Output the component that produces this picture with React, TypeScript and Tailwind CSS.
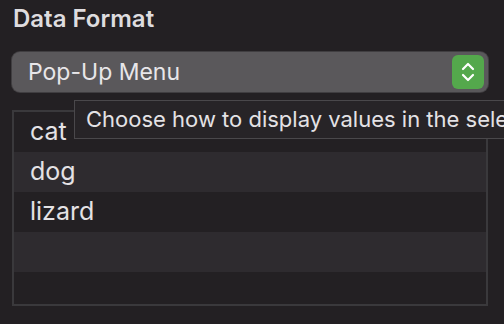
import React from "react";

const ROWS = ["cat", "dog", "lizard", "", ""];

function Chevrons() {
  return (
    <svg width="16" height="24" viewBox="0 0 16 24" fill="none">
      <path d="M3 9 L8 4 L13 9" stroke="white" strokeWidth="2.2" strokeLinecap="round" strokeLinejoin="round" />
      <path d="M3 15 L8 20 L13 15" stroke="white" strokeWidth="2.2" strokeLinecap="round" strokeLinejoin="round" />
    </svg>
  );
}

export default function App() {
  return (
    <div
      className="relative h-[324px] w-[504px] overflow-hidden bg-[#232023] text-[#e4e2e5]"
      style={{ fontFamily: "Inter, 'Noto Sans', sans-serif" }}
    >
      <div className="px-[13px] pt-[5px]">
        <div className="h-[28px] text-[24px] leading-[28px] font-semibold text-[#dedcdf]">Data Format</div>
      </div>

      <div className="ml-[12px] mr-[16px] mt-[19px] flex h-[40px] items-center justify-between rounded-[8px] bg-[#5a585b] pl-[16px] pr-[4px] shadow-[0_0_0_1px_#403e41]">
        <span className="text-[23px] text-[#e8e6e9]">Pop-Up Menu</span>
        <div className="flex h-[34px] w-[32px] items-center justify-center rounded-[6px] bg-[#54a84c]">
          <Chevrons />
        </div>
      </div>

      <div className="ml-[12px] mr-[16px] mt-[18px] h-[196px] overflow-hidden border-2 border-[#3a393c]">
        {ROWS.map((r, i) => (
          <div
            key={i}
            className={`flex h-[40px] items-center pl-[16px] text-[25px] ${i % 2 === 1 ? "bg-[#2e2b2f]" : "bg-[#232023]"}`}
          >
            {r}
          </div>
        ))}
      </div>

      <div className="absolute left-[74px] top-[100px] flex h-[39px] w-[440px] items-center overflow-hidden border border-[#4a484b] bg-[#272427] pl-[11px] text-[22px] whitespace-nowrap text-[#e4e2e5]">
        Choose how to display values in the selected cell
      </div>
    </div>
  );
}
